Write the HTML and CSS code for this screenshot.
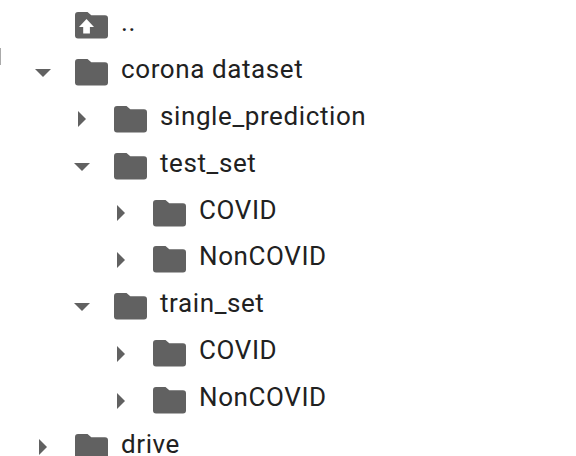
FILE: index.html
```html
<!DOCTYPE html>
<html lang="en">
<head>
<meta charset="utf-8">
<title>Files</title>
<link rel="stylesheet" href="styles.css">
</head>
<body>
<svg width="0" height="0" class="defs">
  <symbol id="folder" viewBox="0 0 33 27"><path d="M3 0H12.5L16.3 3.3H30Q33 3.3 33 6.3V23.5Q33 26.5 30 26.5H3Q0 26.5 0 23.5V3Q0 0 3 0Z"/></symbol>
  <symbol id="down" viewBox="0 0 16 8"><path d="M0 0H16L8 8Z"/></symbol>
  <symbol id="right" viewBox="0 0 8 16"><path d="M0 0L8 8L0 16Z"/></symbol>
</svg>
<span class="handle"></span>
<ul class="tree">
  <li class="row"><span class="toggle"></span><svg class="folder" viewBox="0 0 33 27"><use href="#folder"/><path class="up" d="M8.2 21.6V14.9H4L11.5 7L19 14.9H14.9V21.6Z"/></svg><span class="label">..</span></li>
  <li class="row"><span class="toggle"><svg class="down"><use href="#down"/></svg></span><svg class="folder"><use href="#folder"/></svg><span class="label">corona dataset</span></li>
  <li class="row level-1"><span class="toggle"><svg class="right"><use href="#right"/></svg></span><svg class="folder"><use href="#folder"/></svg><span class="label">single_prediction</span></li>
  <li class="row level-1"><span class="toggle"><svg class="down"><use href="#down"/></svg></span><svg class="folder"><use href="#folder"/></svg><span class="label">test_set</span></li>
  <li class="row level-2"><span class="toggle"><svg class="right"><use href="#right"/></svg></span><svg class="folder"><use href="#folder"/></svg><span class="label">COVID</span></li>
  <li class="row level-2"><span class="toggle"><svg class="right"><use href="#right"/></svg></span><svg class="folder"><use href="#folder"/></svg><span class="label">NonCOVID</span></li>
  <li class="row level-1"><span class="toggle"><svg class="down"><use href="#down"/></svg></span><svg class="folder"><use href="#folder"/></svg><span class="label">train_set</span></li>
  <li class="row level-2"><span class="toggle"><svg class="right"><use href="#right"/></svg></span><svg class="folder"><use href="#folder"/></svg><span class="label">COVID</span></li>
  <li class="row level-2"><span class="toggle"><svg class="right"><use href="#right"/></svg></span><svg class="folder"><use href="#folder"/></svg><span class="label">NonCOVID</span></li>
  <li class="row"><span class="toggle"><svg class="right"><use href="#right"/></svg></span><svg class="folder"><use href="#folder"/></svg><span class="label">drive</span></li>
</ul>
</body>
</html>
```
FILE: styles.css
```css
body {
  margin: 0;
  height: 456px;
  overflow: hidden;
  background: #fff;
  color: #212121;
  font: 26px/34px Roboto, sans-serif;
  letter-spacing: 0.6px;
}
.defs, .handle { position: absolute; }
.handle {
  top: 48px;
  left: 0;
  width: 1px;
  height: 17px;
  background: #aaa;
}
.tree {
  margin: 0;
  padding: 0 0 0 34px;
  list-style: none;
}
.row {
  display: flex;
  align-items: center;
  height: 46.9px;
}
.level-1 { padding-left: 39px; }
.level-2 { padding-left: 78px; }
.toggle {
  display: flex;
  justify-content: center;
  width: 17px;
  margin: 4px 24px 0 0;
}
.folder {
  width: 33px;
  height: 27px;
  margin: 4px 13px 0 0;
  fill: #616161;
}
.folder .up { fill: #fff; }
.down { width: 16px; height: 8px; margin-top: 1px; fill: #616161; }
.right { width: 8px; height: 16px; margin-left: 1px; fill: #616161; }
.label {
  margin-bottom: 3px;
  white-space: nowrap;
}
```
